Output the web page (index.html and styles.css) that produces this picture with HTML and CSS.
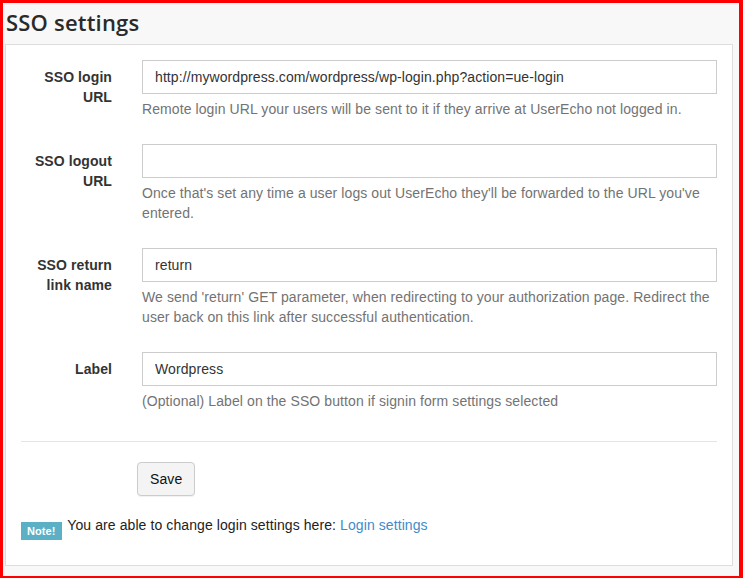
FILE: index.html
```html
<!DOCTYPE html>
<html>
<head>
<meta charset="utf-8">
<link rel="stylesheet" href="styles.css">
</head>
<body>
<div class="frame">
  <h1 class="title">SSO settings</h1>
  <div class="panel">
    <div class="form-group">
      <label class="control-label">SSO login URL</label>
      <div class="control">
        <input class="form-control" type="text" value="http://mywordpress.com/wordpress/wp-login.php?action=ue-login">
        <p class="help">Remote login URL your users will be sent to it if they arrive at UserEcho not logged in.</p>
      </div>
    </div>
    <div class="form-group">
      <label class="control-label">SSO logout URL</label>
      <div class="control">
        <input class="form-control" type="text" value="">
        <p class="help">Once that's set any time a user logs out UserEcho they'll be forwarded to the URL you've entered.</p>
      </div>
    </div>
    <div class="form-group">
      <label class="control-label">SSO return link name</label>
      <div class="control">
        <input class="form-control" type="text" value="return">
        <p class="help">We send 'return' GET parameter, when redirecting to your authorization page. Redirect the user back on this link after successful authentication.</p>
      </div>
    </div>
    <div class="form-group">
      <label class="control-label">Label</label>
      <div class="control">
        <input class="form-control" type="text" value="Wordpress">
        <p class="help">(Optional) Label on the SSO button if signin form settings selected</p>
      </div>
    </div>
    <hr class="divider">
    <div class="actions">
      <button class="btn" type="button">Save</button>
    </div>
    <p class="note"><span class="note-label">Note!</span> You are able to change login settings here: <a class="link" href="#">Login settings</a></p>
  </div>
</div>
</body>
</html>
```
FILE: styles.css
```css
html, body {
  margin: 0;
  padding: 0;
  background: #ffffff;
}
body {
  font-family: "Liberation Sans", Arial, sans-serif;
  font-size: 14px;
  line-height: 20px;
  letter-spacing: 0.09px;
  color: #333333;
}
.frame {
  box-sizing: border-box;
  width: 743px;
  height: 578px;
  border-style: solid;
  border-color: #ff0000;
  border-width: 3px 4px 2px 3px;
  background: #f8f8f8;
  overflow: hidden;
}
.title {
  margin: 0;
  padding: 4px 3px 0 3px;
  font-family: "Open Sans", sans-serif;
  font-weight: 600;
  font-size: 22px;
  line-height: 30px;
  letter-spacing: 0.2px;
  color: #2a2a2a;
}
.panel {
  margin: 7px 6px 0 2px;
  background: #ffffff;
  border: 1px solid #dddddd;
  padding: 15px 15px 15px 15px;
}
.form-group {
  display: grid;
  grid-template-columns: 91px 1fr;
  column-gap: 30px;
  margin-bottom: 15px;
}
.control-label {
  padding-top: 7px;
  text-align: right;
  font-weight: 700;
  color: #333333;
}
.form-control {
  display: block;
  box-sizing: border-box;
  width: 100%;
  height: 34px;
  margin: 0;
  padding: 6px 12px;
  border: 1px solid #cccccc;
  border-radius: 0;
  font-family: "Liberation Sans", Arial, sans-serif;
  font-size: 14px;
  line-height: 20px;
  letter-spacing: 0.09px;
  color: #333333;
  background: #ffffff;
}
.help {
  margin: 5px 0 10px 0;
  color: #737373;
}
.divider {
  margin: 20px 0;
  border: 0;
  border-top: 1px solid #e5e5e5;
}
.actions {
  padding-left: 116px;
}
.btn {
  box-sizing: border-box;
  height: 34px;
  padding: 6px 12px;
  border: 1px solid #cccccc;
  border-radius: 4px;
  background: #f4f4f4;
  font-family: "Liberation Sans", Arial, sans-serif;
  font-size: 14px;
  line-height: 20px;
  letter-spacing: 0.09px;
  color: #111111;
  box-shadow: 0 1px 1px rgba(0,0,0,0.06);
}
.note {
  margin: 19px 0 10px 0;
  color: #222222;
}
.note-label {
  display: inline-block;
  height: 18px;
  line-height: 18px;
  padding: 0 6px;
  margin-right: 2px;
  background: #5bb0c6;
  color: #ffffff;
  font-size: 11px;
  font-weight: 700;
  vertical-align: -5px;
}
.link {
  color: #428bca;
  text-decoration: none;
}
```
